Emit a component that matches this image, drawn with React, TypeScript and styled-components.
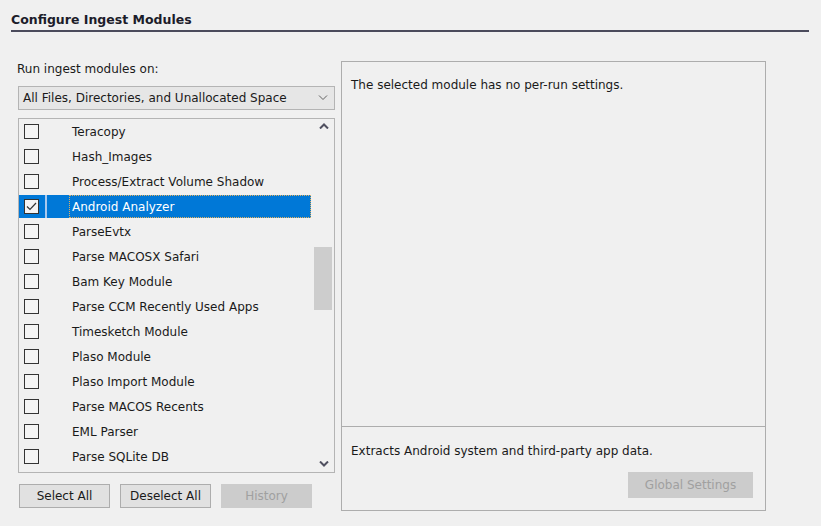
import React from "react";
import styled, { createGlobalStyle } from "styled-components";

const Global = createGlobalStyle`
  html, body { margin: 0; padding: 0; background: #f0f0f0; }
  body { font-family: "DejaVu Sans", "Noto Sans", sans-serif; font-size: 12px; color: #1a1a1a; }
  * { box-sizing: border-box; }
`;

const Page = styled.div`
  width: 821px;
  height: 526px;
  padding: 11px 12px 0 11px;
  background: #f0f0f0;
`;

const Title = styled.div`
  font-weight: bold;
  font-size: 12.5px;
  line-height: 18px;
  color: #1c1c2a;
  width: 798px;
  border-bottom: 2px solid #4b4b5c;
  padding-bottom: 1px;
`;

const Main = styled.div`
  display: flex;
  gap: 6px;
  margin-top: 29px;
  padding-left: 7px;
`;

const LeftCol = styled.div`
  width: 317px;
  display: flex;
  flex-direction: column;
`;

const Label = styled.div`
  line-height: 16px;
  margin-left: -1px;
`;

const Combo = styled.div`
  margin-top: 9px;
  height: 24px;
  border: 1px solid #b4b4b4;
  background: #e6e6e6;
  display: flex;
  align-items: center;
  justify-content: space-between;
  padding: 0 6px 0 4px;
`;

const ListBox = styled.div`
  margin-top: 8px;
  height: 355px;
  border: 1px solid #b4b4b4;
  background: #f0f0f0;
  display: flex;
`;

const Rows = styled.div`
  flex: 1;
  display: flex;
  flex-direction: column;
`;

const Row = styled.div`
  height: 25px;
  display: flex;
  align-items: stretch;
  padding: 1px 0;
`;

const CheckCell = styled.div<{ $sel?: boolean }>`
  width: 26px;
  display: flex;
  align-items: center;
  padding-left: 5px;
  background: ${(p) => (p.$sel ? "#0078d7" : "transparent")};
`;

const Sep = styled.div<{ $sel?: boolean }>`
  width: 2px;
  background: ${(p) => (p.$sel ? "#a9c9ee" : "transparent")};
`;

const IconCell = styled.div<{ $sel?: boolean }>`
  width: 22px;
  background: ${(p) => (p.$sel ? "#0078d7" : "transparent")};
`;

const NameCell = styled.div<{ $sel?: boolean }>`
  width: 242px;
  display: flex;
  align-items: center;
  padding-left: 2px;
  color: ${(p) => (p.$sel ? "#ffffff" : "#1a1a1a")};
  background: ${(p) => (p.$sel ? "#0078d7" : "transparent")};
  border: 1px dotted ${(p) => (p.$sel ? "#e0b060" : "transparent")};
  white-space: nowrap;
`;

const Box = styled.div`
  width: 15px;
  height: 15px;
  border: 1px solid #333333;
  background: #f4f4f4;
  display: flex;
  align-items: center;
  justify-content: center;
`;

const Scroll = styled.div`
  width: 21px;
  display: flex;
  flex-direction: column;
  align-items: center;
  justify-content: space-between;
  padding: 4px 0 5px;
  position: relative;
`;

const Thumb = styled.div`
  position: absolute;
  left: 1px;
  top: 128px;
  width: 18px;
  height: 63px;
  background: #cdcdcd;
`;

const Buttons = styled.div`
  display: flex;
  gap: 10px;
  margin-top: 11px;
  padding-left: 1px;
`;

const Button = styled.div<{ $disabled?: boolean }>`
  width: 91px;
  height: 24px;
  display: flex;
  align-items: center;
  justify-content: center;
  border: 1px solid ${(p) => (p.$disabled ? "#cccccc" : "#adadad")};
  background: ${(p) => (p.$disabled ? "#cccccc" : "#e1e1e1")};
  color: ${(p) => (p.$disabled ? "#a0a0a0" : "#1a1a1a")};
`;

const RightPanel = styled.div`
  width: 425px;
  height: 450px;
  border: 1px solid #adadad;
  display: flex;
  flex-direction: column;
`;

const Settings = styled.div`
  flex: 1;
  padding: 15px 9px;
  line-height: 16px;
  border-bottom: 1px solid #adadad;
`;

const Desc = styled.div`
  height: 83px;
  padding: 16px 12px 0 9px;
  display: flex;
  flex-direction: column;
  line-height: 16px;
`;

const GlobalBtn = styled.div`
  align-self: flex-end;
  margin-top: 13px;
  width: 125px;
  height: 26px;
  background: #cccccc;
  color: #a0a0a0;
  display: flex;
  align-items: center;
  justify-content: center;
`;

const modules = [
  "Teracopy",
  "Hash_Images",
  "Process/Extract Volume Shadow",
  "Android Analyzer",
  "ParseEvtx",
  "Parse MACOSX Safari",
  "Bam Key Module",
  "Parse CCM Recently Used Apps",
  "Timesketch Module",
  "Plaso Module",
  "Plaso Import Module",
  "Parse MACOS Recents",
  "EML Parser",
  "Parse SQLite DB",
];

const Chevron = ({ up, bold }: { up?: boolean; bold?: boolean }) => (
  <svg width="10" height="6" viewBox="0 0 10 6">
    <path
      d={up ? "M1 5.5 L5 1.5 L9 5.5" : "M1 0.5 L5 4.5 L9 0.5"}
      fill="none"
      stroke={bold ? "#505060" : "#606060"}
      strokeWidth={bold ? 2 : 1}
    />
  </svg>
);

export default function App() {
  return (
    <Page>
      <Global />
      <Title>Configure Ingest Modules</Title>
      <Main>
        <LeftCol>
          <Label>Run ingest modules on:</Label>
          <Combo>
            <span>All Files, Directories, and Unallocated Space</span>
            <Chevron />
          </Combo>
          <ListBox>
            <Rows>
              {modules.map((m, i) => {
                const sel = i === 3;
                return (
                  <Row key={m}>
                    <CheckCell $sel={sel}>
                      <Box>
                        {sel && (
                          <svg width="11" height="9" viewBox="0 0 11 9">
                            <path d="M1 4.5 L4 7.5 L10 1" fill="none" stroke="#333" strokeWidth="1.2" />
                          </svg>
                        )}
                      </Box>
                    </CheckCell>
                    <Sep $sel={sel} />
                    <IconCell $sel={sel} />
                    <NameCell $sel={sel}>{m}</NameCell>
                  </Row>
                );
              })}
            </Rows>
            <Scroll>
              <Chevron up bold />
              <Thumb />
              <Chevron bold />
            </Scroll>
          </ListBox>
          <Buttons>
            <Button>Select All</Button>
            <Button>Deselect All</Button>
            <Button $disabled>History</Button>
          </Buttons>
        </LeftCol>
        <RightPanel>
          <Settings>The selected module has no per-run settings.</Settings>
          <Desc>
            <span>Extracts Android system and third-party app data.</span>
            <GlobalBtn>Global Settings</GlobalBtn>
          </Desc>
        </RightPanel>
      </Main>
    </Page>
  );
}
